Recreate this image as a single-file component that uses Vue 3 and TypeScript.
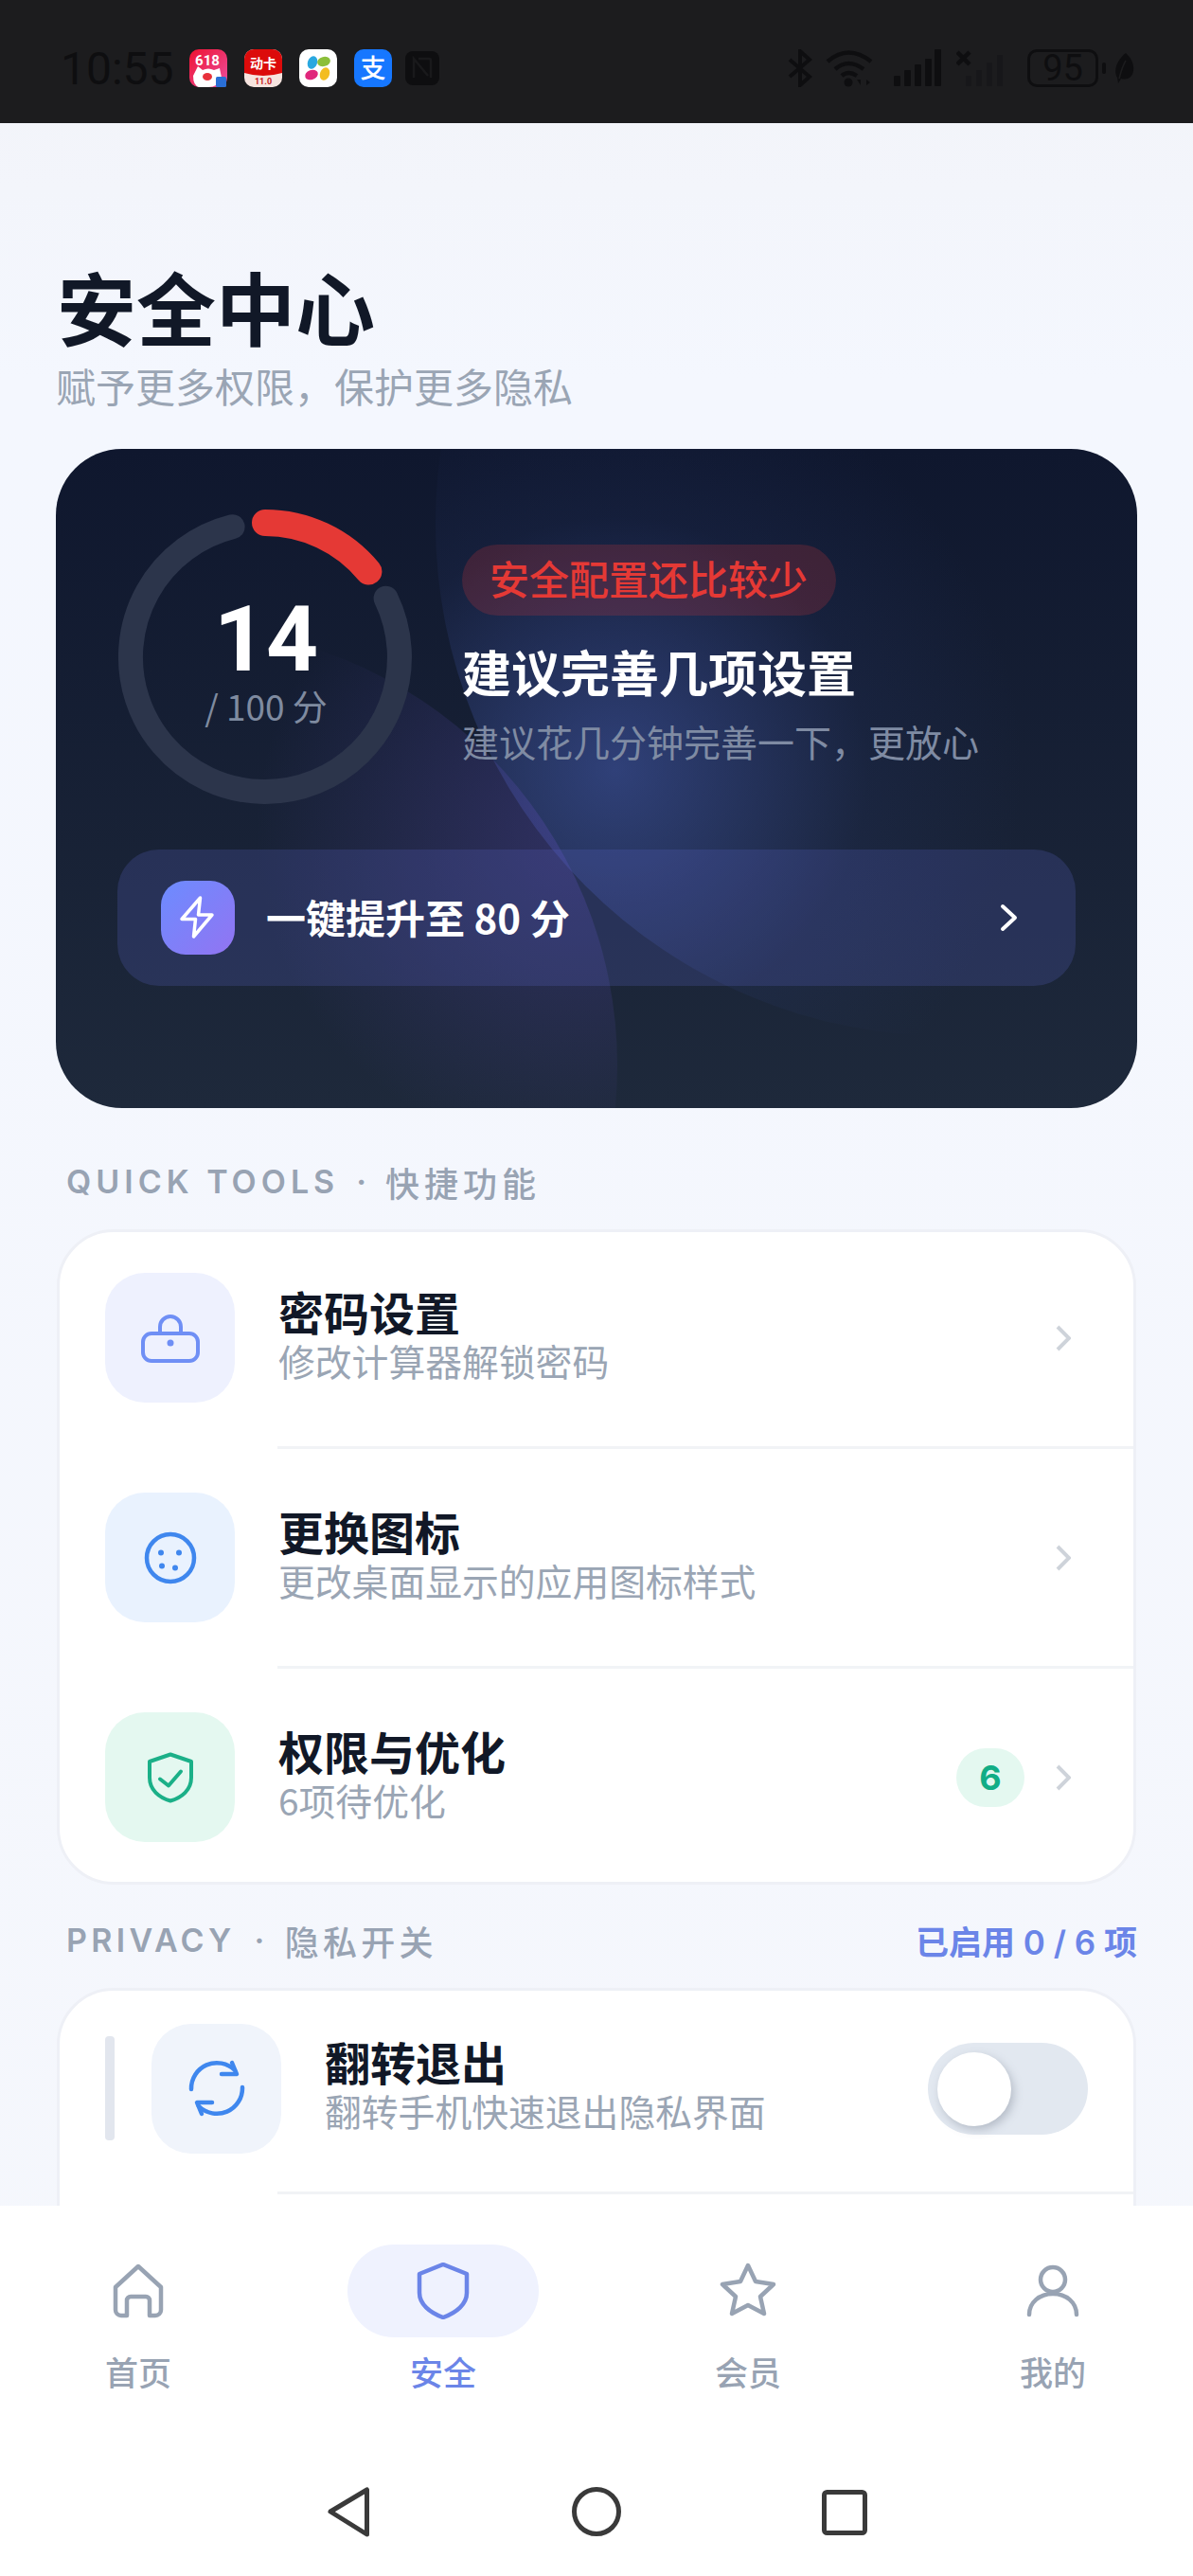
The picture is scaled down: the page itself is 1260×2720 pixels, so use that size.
<script setup lang="ts">
import { ref } from 'vue';

const tools = ref([
  { key: 'lock', title: '密码设置', sub: '修改计算器解锁密码', tile: 'tile-indigo', badge: 0 },
  { key: 'palette', title: '更换图标', sub: '更改桌面显示的应用图标样式', tile: 'tile-blue', badge: 0 },
  { key: 'shield', title: '权限与优化', sub: '6项待优化', tile: 'tile-green', badge: 6 }
]);

const tabs = ref([
  { key: 'home', label: '首页' },
  { key: 'safe', label: '安全' },
  { key: 'star', label: '会员' },
  { key: 'user', label: '我的' }
]);

const active = ref('safe');
const flipOn = ref(false);

const radius = 142;
const point = (deg: number) => {
  const a = ((deg - 90) * Math.PI) / 180;
  return `${(156 + radius * Math.cos(a)).toFixed(1)} ${(156 + radius * Math.sin(a)).toFixed(1)}`;
};
const arc = (from: number, to: number) => {
  const large = to - from > 180 ? 1 : 0;
  return `M${point(from)} A${radius} ${radius} 0 ${large} 1 ${point(to)}`;
};
const trackPath = arc(64, 346);
const scorePath = arc(0, 50.4);
</script>

<template>
  <div class="phone">
    <header class="status">
      <span class="time">10:55</span>
      <div class="apps">
        <svg class="app" viewBox="0 0 40 40">
          <defs>
            <linearGradient id="g618" x1="0" y1="0" x2="1" y2="1">
              <stop offset="0" stop-color="#ee1230" />
              <stop offset="1" stop-color="#ec4fa0" />
            </linearGradient>
          </defs>
          <rect width="40" height="40" rx="10" fill="url(#g618)" />
          <text x="19" y="17" class="t618">618</text>
          <path d="M4 28 L9 18 L14 22 Q20 19 26 22 L32 20 L34 30 Q30 40 20 40 H10 Q4 38 4 28Z" fill="#fff" />
          <ellipse cx="19" cy="29" rx="5" ry="4" fill="#e8303a" />
          <rect x="28" y="29" width="11" height="11" rx="1.5" fill="#2a6fd6" />
        </svg>
        <svg class="app" viewBox="0 0 40 40">
          <rect width="40" height="40" rx="10" fill="#f6e4df" />
          <path d="M0 10 a10 10 0 0 1 10 -10 H30 a10 10 0 0 1 10 10 V25 Q20 31 0 25Z" fill="#dc0b0b" />
          <text x="20" y="20" class="tcard">动卡</text>
          <text x="20" y="37" class="tver">11.0</text>
        </svg>
        <svg class="app" viewBox="0 0 40 40">
          <rect width="40" height="40" rx="10" fill="#fff" />
          <ellipse cx="14" cy="14" rx="5" ry="7" transform="rotate(20 14 14)" fill="#2aa8e0" />
          <ellipse cx="26" cy="13" rx="7" ry="5" transform="rotate(-15 26 13)" fill="#8cbf3a" />
          <ellipse cx="13" cy="27" rx="7" ry="5" transform="rotate(-20 13 27)" fill="#e0277c" />
          <ellipse cx="27" cy="26" rx="5" ry="7" transform="rotate(20 27 26)" fill="#f3bd22" />
        </svg>
        <svg class="app" viewBox="0 0 40 40">
          <rect width="40" height="40" rx="10" fill="#1677ff" />
          <text x="20" y="30" class="tpay">支</text>
        </svg>
        <svg class="nfc" viewBox="0 0 36 36">
          <rect width="36" height="36" rx="8" fill="#0e0e10" />
          <path d="M9 28 V8 L24 26 M14 8 H25 a2 2 0 0 1 2 2 V28" fill="none" stroke="#19191b" stroke-width="2.5" />
        </svg>
      </div>
      <div class="sys">
        <svg width="26" height="40" viewBox="0 0 26 40" class="ind">
          <path d="M2 11 L23 29 L13 38 V2 L23 11 L2 29" fill="none" stroke="currentColor" stroke-width="4" />
        </svg>
        <svg width="52" height="40" viewBox="0 0 52 40" class="ind wifi">
          <path d="M2 13 Q24 -6 48 13 M10 21 Q24 9 40 21 M17 28 Q24 22 33 28" fill="none" stroke="currentColor" stroke-width="4.5" />
          <circle cx="24" cy="35" r="4.5" fill="currentColor" />
          <path d="M33 32 L37 38 V32 M43 32 L43 38 L47 35Z" fill="currentColor" />
        </svg>
        <svg width="50" height="40" viewBox="0 0 50 40" class="ind signal">
          <rect x="0" y="28" width="7" height="11" rx="1" />
          <rect x="11" y="22" width="7" height="17" rx="1" />
          <rect x="22" y="16" width="7" height="23" rx="1" />
          <rect x="33" y="10" width="7" height="29" rx="1" />
          <rect x="43" y="0" width="7" height="39" rx="1" />
        </svg>
        <svg width="58" height="40" viewBox="0 0 58 40" class="ind second">
          <path d="M1 3 L14 16 M14 3 L1 16" fill="none" stroke="currentColor" stroke-width="4.5" />
          <g fill="#17171a">
            <rect x="10" y="28" width="6" height="11" />
            <rect x="21" y="22" width="6" height="17" />
            <rect x="32" y="14" width="6" height="25" />
            <rect x="43" y="6" width="6" height="33" />
          </g>
        </svg>
        <div class="battery"><span>95</span></div>
        <i class="nub"></i>
        <svg width="22" height="32" viewBox="0 0 22 32" class="ind leaf">
          <path d="M13 0 C20 6 24 16 19 24 C16 28 11 28 8 27 L5 32 L4 26 C-1 18 5 6 13 0Z" fill="currentColor" />
          <path d="M6 27 C8 19 10 13 13 8" fill="none" stroke="#1c1c1e" stroke-width="1.5" />
        </svg>
      </div>
    </header>

    <main class="content">
      <h1 class="page-title">安全中心</h1>
      <p class="page-sub">赋予更多权限，保护更多隐私</p>

      <section class="hero">
        <div class="shape-a"></div>
        <div class="shape-b"></div>
        <div class="hero-top">
          <div class="ring">
            <svg width="312" height="312" viewBox="0 0 312 312">
              <path :d="trackPath" fill="none" stroke="#2c354b" stroke-width="26" stroke-linecap="round" />
              <path :d="scorePath" fill="none" stroke="#e53935" stroke-width="28" stroke-linecap="round" />
            </svg>
            <div class="ring-label">
              <b class="score">14</b>
              <span class="score-max">/ 100 分</span>
            </div>
          </div>
          <div class="hero-info">
            <span class="level">安全配置还比较少</span>
            <h2 class="hero-title">建议完善几项设置</h2>
            <p class="hero-sub">建议花几分钟完善一下，更放心</p>
          </div>
        </div>
        <div class="boost">
          <span class="boost-icon">
            <svg width="44" height="50" viewBox="0 0 44 50">
              <path d="M24.5 4 L5 26.5 H19.5 L17.5 45 L37 22 H22.5Z" fill="none" stroke="#fff" stroke-width="3.5" stroke-linejoin="round" />
            </svg>
          </span>
          <span class="boost-text">一键提升至 80 分</span>
          <svg class="boost-arrow" width="20" height="30" viewBox="0 0 20 30">
            <path d="M3 3 L16 15 L3 27" fill="none" stroke="#fff" stroke-width="4" stroke-linecap="round" stroke-linejoin="round" />
          </svg>
        </div>
      </section>

      <div class="section-head first">
        <span class="section-label"><span>QUICK TOOLS</span><i class="dot">·</i><span class="cjk">快捷功能</span></span>
      </div>
      <section class="list">
        <div v-for="item in tools" :key="item.key" class="row">
          <span class="tile" :class="item.tile">
            <svg v-if="item.key === 'lock'" width="64" height="64" viewBox="0 0 64 64" fill="none" stroke="#6f8ff5" stroke-width="4">
              <rect x="3" y="27" width="58" height="29" rx="9" />
              <path d="M21 27 V20 a11 11 0 0 1 22 0 V27" />
              <circle cx="32" cy="37" r="3.5" fill="#6f8ff5" stroke="none" />
            </svg>
            <svg v-else-if="item.key === 'palette'" width="64" height="64" viewBox="0 0 64 64" fill="none" stroke="#3f87ee" stroke-width="4.5">
              <circle cx="32" cy="32" r="25" />
              <g fill="#3f87ee" stroke="none">
                <circle cx="22" cy="26.5" r="3" />
                <circle cx="41" cy="26.5" r="3" />
                <circle cx="23" cy="40.5" r="3" />
                <circle cx="37" cy="42.5" r="3" />
              </g>
            </svg>
            <svg v-else width="64" height="64" viewBox="0 0 64 64" fill="none" stroke="#1bb088" stroke-width="4" stroke-linecap="round" stroke-linejoin="round">
              <path d="M32 7.5 L54 15 V32 C54 45 44 53 32 56.5 C20 53 10 45 10 32 V15Z" />
              <path d="M21 33.5 L30 40.5 L43 25.5" />
            </svg>
          </span>
          <div class="row-text">
            <span class="row-title">{{ item.title }}</span>
            <span class="row-sub">{{ item.sub }}</span>
          </div>
          <span v-if="item.badge" class="count">{{ item.badge }}</span>
          <svg class="chev" width="16" height="28" viewBox="0 0 16 28">
            <path d="M2 2 L14 14 L2 26" fill="none" stroke="#ced3da" stroke-width="4" />
          </svg>
        </div>
      </section>

      <div class="section-head">
        <span class="section-label tight"><span>PRIVACY</span><i class="dot">·</i><span class="cjk">隐私开关</span></span>
        <span class="enabled">已启用 0 / 6 项</span>
      </div>
      <section class="list privacy">
        <div class="row-flip">
          <i class="bar"></i>
          <span class="tile tile-slate">
            <svg width="64" height="64" viewBox="0 0 64 64" fill="none" stroke="#3f87ee" stroke-width="4.5" stroke-linecap="round" stroke-linejoin="round">
              <path d="M5 33 A27 27 0 0 1 51 13" />
              <path d="M48 5 L53 17 L37 17" />
              <path d="M59 31 A27 27 0 0 1 13 51" />
              <path d="M16 59 L11 47 L27 47" />
            </svg>
          </span>
          <div class="row-text">
            <span class="row-title">翻转退出</span>
            <span class="row-sub">翻转手机快速退出隐私界面</span>
          </div>
          <span class="switch" :class="{ on: flipOn }"><i class="knob"></i></span>
        </div>
      </section>
    </main>

    <footer class="nav">
      <div class="tabs">
        <div v-for="tab in tabs" :key="tab.key" class="tab" :class="{ active: tab.key === active }">
          <span class="tab-icon">
            <svg width="60" height="60" viewBox="0 0 60 60" fill="none" stroke="currentColor" stroke-width="4.5" stroke-linejoin="round" stroke-linecap="round">
              <path v-if="tab.key === 'home'" d="M30 4 L54 26 V50 a6 6 0 0 1-6 6 H42 V40 a4 4 0 0 0-4-4 H22 a4 4 0 0 0-4 4 V56 H12 a6 6 0 0 1-6-6 V26Z" />
              <path v-else-if="tab.key === 'safe'" d="M30 2 L55 12 V32 C55 44 44 53 30 58 C16 53 5 44 5 32 V12Z" />
              <path v-else-if="tab.key === 'star'" d="M30 3 L38 20 L57 23 L43 36 L47 54 L30 45 L13 54 L17 36 L3 23 L22 20Z" />
              <template v-else>
                <circle cx="30" cy="18" r="13" />
                <path d="M5 55 C5 42 16 33 30 33 S55 42 55 55" />
              </template>
            </svg>
          </span>
          <span class="tab-label">{{ tab.label }}</span>
        </div>
      </div>
      <div class="sysnav">
        <svg width="60" height="60" viewBox="0 0 60 60" fill="none" stroke="#3a3a3a" stroke-width="5" stroke-linejoin="round">
          <path d="M11 30 L49.5 7 V54Z" />
        </svg>
        <svg width="60" height="60" viewBox="0 0 60 60" fill="none" stroke="#3a3a3a" stroke-width="5">
          <circle cx="30" cy="30" r="23.5" />
        </svg>
        <svg width="60" height="60" viewBox="0 0 60 60" fill="none" stroke="#3a3a3a" stroke-width="5">
          <rect x="8.5" y="9.5" width="43" height="43" rx="3" />
        </svg>
      </div>
    </footer>
  </div>
</template>

<style scoped>
.phone {
  width: 1260px;
  height: 2720px;
  display: flex;
  flex-direction: column;
  overflow: hidden;
  font-family: "Noto Sans CJK SC", "Noto Sans", sans-serif;
  background: linear-gradient(180deg, #f2f3f8 0, #f4f7fe 400px, #f5f7fc 100%);
}

/* status bar */
.status {
  flex: none;
  height: 130px;
  background: #1c1c1e;
  display: flex;
  align-items: center;
  padding: 14px 62px 0 64px;
  box-sizing: border-box;
  color: #0e0e10;
}
.time {
  font-family: Roboto, sans-serif;
  font-size: 48px;
  width: 136px;
}
.apps {
  display: flex;
  align-items: center;
  gap: 18px;
}
.app {
  width: 40px;
  height: 40px;
}
.nfc {
  width: 36px;
  height: 36px;
  margin-left: -4px;
}
.t618 {
  font: 700 15px Roboto, sans-serif;
  fill: #fff;
  text-anchor: middle;
}
.tcard {
  font: 700 14px "Noto Sans CJK SC", sans-serif;
  fill: #fff;
  text-anchor: middle;
}
.tver {
  font: 700 9px Roboto, sans-serif;
  fill: #c8201c;
  text-anchor: middle;
}
.tpay {
  font: 500 27px "Noto Sans CJK SC", sans-serif;
  fill: #fff;
  text-anchor: middle;
}
.sys {
  margin-left: auto;
  display: flex;
  align-items: center;
  gap: 14px;
  color: #0e0e10;
}
.signal {
  fill: #0e0e10;
  margin-left: 6px;
}
.second {
  margin-left: 2px;
}
.battery {
  width: 75px;
  height: 40px;
  box-sizing: border-box;
  border: 3px solid #0e0e10;
  border-radius: 10px;
  display: flex;
  align-items: center;
  justify-content: center;
  font: 400 38px Roboto, sans-serif;
  margin-left: 3px;
}
.nub {
  width: 4px;
  height: 12px;
  background: #0e0e10;
  margin-left: -10px;
  border-radius: 2px;
}
.leaf {
  margin-left: -6px;
}

/* page */
.content {
  flex: 1;
  min-height: 0;
  overflow: hidden;
  padding: 148px 59px 0;
}
.page-title {
  margin: 0;
  font-size: 84px;
  line-height: 90px;
  font-weight: 700;
  color: #111827;
  padding-left: 1px;
}
.page-sub {
  margin: 12px 0 0;
  font-size: 42px;
  line-height: 56px;
  color: #9aa5b4;
  transform: translateY(-1px);
}

/* score card */
.hero {
  position: relative;
  margin-top: 38px;
  height: 696px;
  box-sizing: border-box;
  padding: 64px 65px 0;
  border-radius: 70px;
  overflow: hidden;
  background: linear-gradient(180deg, #0f172e 0%, #1e293b 100%);
}
.shape-a,
.shape-b {
  position: absolute;
  border-radius: 50%;
}
.shape-a {
  left: 401px;
  top: -462px;
  width: 1082px;
  height: 1082px;
  background: radial-gradient(circle 430px at 190px 800px, rgba(66, 88, 170, 0.58), rgba(50, 70, 140, 0.12) 62%, rgba(50, 70, 140, 0) 100%);
}
.shape-b {
  left: -333px;
  top: 188px;
  width: 926px;
  height: 926px;
  background: radial-gradient(circle 340px at 884px 218px, rgba(92, 76, 180, 0.34), rgba(92, 76, 180, 0) 100%);
}
.hero-top {
  position: relative;
  display: flex;
  gap: 52px;
}
.ring {
  position: relative;
  flex: none;
  width: 312px;
  height: 312px;
}
.ring svg {
  display: block;
}
.ring-label {
  position: absolute;
  inset: 0;
  display: flex;
  flex-direction: column;
  align-items: center;
  padding: 87px 0 0 2px;
  box-sizing: border-box;
}
.score {
  font-family: Roboto, sans-serif;
  font-size: 96px;
  line-height: 100px;
  font-weight: 700;
  color: #fff;
}
.score-max {
  margin-top: -5px;
  font-size: 37px;
  line-height: 50px;
  color: #7f8ba0;
}
.hero-info {
  padding-top: 37px;
  display: flex;
  flex-direction: column;
  align-items: flex-start;
}
.level {
  height: 75px;
  line-height: 69px;
  padding: 0 30px 0 29px;
  border-radius: 38px;
  font-size: 42px;
  font-weight: 500;
  color: #e53935;
  background: rgba(229, 57, 53, 0.2);
}
.hero-title {
  margin: 29px 0 0;
  font-size: 52px;
  line-height: 60px;
  font-weight: 700;
  color: #fff;
}
.hero-sub {
  margin: 18px 0 0;
  font-size: 39px;
  line-height: 50px;
  color: #7f8ba3;
}
.boost {
  position: relative;
  margin-top: 47px;
  height: 144px;
  display: flex;
  align-items: center;
  padding: 0 60px 0 46px;
  border-radius: 44px;
  background: rgba(99, 110, 220, 0.2);
}
.boost-icon {
  width: 78px;
  height: 78px;
  border-radius: 26px;
  display: flex;
  align-items: center;
  justify-content: center;
  background: linear-gradient(135deg, #6c8cff, #9274f2);
}
.boost-text {
  margin-left: 33px;
  margin-bottom: 3px;
  font-size: 42px;
  font-weight: 700;
  color: #fff;
}
.boost-arrow {
  margin-left: auto;
}

/* lists */
.section-head {
  margin: 36px 0 25px;
  padding: 0 0 3px 11px;
  box-sizing: border-box;
  height: 48px;
  display: flex;
  align-items: center;
  justify-content: space-between;
}
.section-head.first {
  margin-top: 55px;
}
.section-label {
  display: flex;
  align-items: center;
  font-family: Inter, "Noto Sans CJK SC", sans-serif;
  font-size: 34px;
  font-weight: 600;
  letter-spacing: 5px;
  color: #98a3b3;
}
.section-label.tight {
  letter-spacing: 4.3px;
}
.dot {
  font-style: normal;
  margin: 0 15px 0 18px;
}
.tight .dot {
  margin: 0 17px 0 20px;
}
.cjk {
  font-size: 36px;
  font-weight: 500;
}
.enabled {
  font-family: Inter, "Noto Sans CJK SC", sans-serif;
  font-size: 35px;
  font-weight: 600;
  color: #6b85e8;
}
.list {
  margin: 0 1px;
  background: #fff;
  border: 3px solid #eef0f6;
  border-radius: 60px;
}
.row {
  position: relative;
  height: 229px;
  display: flex;
  align-items: center;
  padding: 0 66px 0 48px;
  margin-bottom: 3px;
}
.row:first-child {
  margin-top: -3px;
}
.row:last-child {
  margin-bottom: -4px;
}
.row:not(:last-child)::after,
.row-flip::after {
  content: "";
  position: absolute;
  left: 230px;
  right: 0;
  bottom: -3px;
  height: 3px;
  background: #f1f3f6;
}
.tile {
  flex: none;
  width: 137px;
  height: 137px;
  border-radius: 42px;
  display: flex;
  align-items: center;
  justify-content: center;
}
.tile-indigo {
  background: #eef1fe;
}
.tile-blue {
  background: #e9f2fe;
}
.tile-green {
  background: #e4f8f0;
}
.tile-slate {
  background: #f0f4fb;
}
.row-text {
  margin-left: 46px;
  padding-bottom: 7px;
  display: flex;
  flex-direction: column;
}
.row-title {
  font-size: 48px;
  line-height: 52px;
  font-weight: 700;
  color: #111827;
}
.row-sub {
  font-size: 38.8px;
  line-height: 50px;
  margin-top: 1px;
  color: #9aa5b4;
}
.count {
  margin-left: auto;
  width: 72px;
  height: 62px;
  border-radius: 31px;
  background: #e4f8f0;
  color: #12ad85;
  font: 700 36px Inter, sans-serif;
  display: flex;
  align-items: center;
  justify-content: center;
}
.chev {
  margin-left: auto;
}
.count + .chev {
  margin-left: 33px;
}

/* privacy switches */
.privacy {
  min-height: 300px;
}
.row-flip {
  position: relative;
  height: 212px;
  box-sizing: border-box;
  padding: 0 48px 6px 48px;
  display: flex;
  align-items: center;
}
.bar {
  flex: none;
  width: 10px;
  height: 110px;
  border-radius: 4px;
  background: #e2e6ee;
  margin-right: 39px;
}
.switch {
  position: relative;
  margin-left: auto;
  width: 169px;
  height: 97px;
  border-radius: 49px;
  background: #e2e8f0;
}
.knob {
  position: absolute;
  left: 10px;
  top: 10px;
  width: 78px;
  height: 78px;
  border-radius: 50%;
  background: #fff;
  box-shadow: 3px 4px 10px rgba(100, 110, 125, 0.35);
}

/* bottom nav */
.nav {
  position: relative;
  flex: none;
  height: 391px;
  background: #fff;
}
.tabs {
  display: flex;
  justify-content: space-between;
  padding: 41px 47px 0 45px;
}
.tab {
  width: 202px;
  display: flex;
  flex-direction: column;
  align-items: center;
  color: #98a3b3;
}
.tab-icon {
  width: 202px;
  height: 98px;
  border-radius: 49px;
  display: flex;
  align-items: center;
  justify-content: center;
}
.tab.active {
  color: #6b85e8;
}
.tab.active .tab-icon {
  background: #eff2fe;
}
.tab-label {
  margin-top: 14px;
  font-size: 35px;
  line-height: 44px;
  font-weight: 500;
}
.sysnav {
  margin-top: 96px;
  display: flex;
  justify-content: center;
  gap: 202px;
}
</style>

<style>
html,
body {
  margin: 0;
  background: #fff;
}
</style>
